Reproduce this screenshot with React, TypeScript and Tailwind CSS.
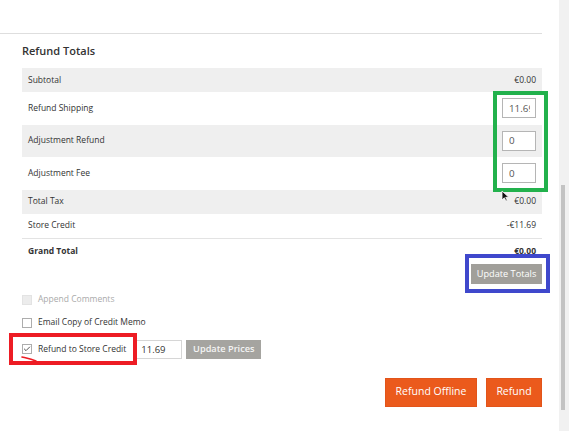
import { Check } from "lucide-react"

interface TotalRow {
  label: string
  value?: string
  input?: string
  shade?: boolean
  tall?: boolean
}

const totals: TotalRow[] = [
  { label: "Subtotal", value: "€0.00", shade: true },
  { label: "Refund Shipping", input: "11.69", tall: true },
  { label: "Adjustment Refund", input: "0", shade: true, tall: true },
  { label: "Adjustment Fee", input: "0", tall: true },
  { label: "Total Tax", value: "€0.00", shade: true },
  { label: "Store Credit", value: "-€11.69" },
]

function Row({ row }: { row: TotalRow }) {
  return (
    <div
      className={`flex items-center justify-between pl-[6px] pr-[6px] ${row.tall ? "h-[32.5px]" : "h-[24px]"} ${
        row.shade ? "bg-[#efefef]" : "bg-white"
      }`}
    >
      <span className="text-[8.5px] text-[#333]">{row.label}</span>
      {row.input !== undefined ? (
        <input
          readOnly
          value={row.input}
          className="w-[34px] h-[20px] border border-[#b5b5b5] bg-white pl-[6px] pr-[5px] text-[9.8px] text-[#555] outline-none"
        />
      ) : (
        <span className="text-[8.5px] text-[#333]">{row.value}</span>
      )}
    </div>
  )
}

export default function App() {
  return (
    <div className="relative flex w-[569px] h-[431px] overflow-hidden bg-white font-['Open_Sans',sans-serif]">
      <div className="w-[559px] shrink-0">
        <div className="h-[34px] w-[542px] border-b border-[#dedede]" />

        <div className="pl-[22px] pr-[17px]">
          <h2 className="mt-[10px] mb-[10px] text-[11px] leading-[14px] font-semibold text-[#333]">Refund Totals</h2>

          <div className="border-b border-[#e3e3e3]">
            {totals.map((row) => (
              <Row key={row.label} row={row} />
            ))}
          </div>

          <div className="flex items-center justify-between h-[25px] pl-[6px] pr-[6px]">
            <span className="text-[8.5px] font-bold text-[#333]">Grand Total</span>
            <span className="text-[8.5px] font-bold text-[#333]">€0.00</span>
          </div>

          <div className="flex justify-end">
            <button className="w-[71px] h-[20px] bg-[#a19f9a] text-[9.2px] text-white">Update Totals</button>
          </div>

          <label className="mt-[9px] flex items-center h-[14px]">
            <span className="w-[10px] h-[10px] border border-[#e3e3e3] bg-[#ececec]" />
            <span className="ml-[6px] text-[8.5px] text-[#aaa]">Append Comments</span>
          </label>

          <label className="mt-[9px] flex items-center h-[14px]">
            <span className="w-[10px] h-[10px] border border-[#adadad] bg-white" />
            <span className="ml-[6px] text-[8.5px] text-[#333]">Email Copy of Credit Memo</span>
          </label>

          <div className="mt-[10px] flex items-center h-[19px]">
            <span className="flex items-center justify-center w-[10px] h-[10px] border border-[#adadad] bg-white">
              <Check className="w-[8px] h-[8px] text-[#333]" strokeWidth={2.5} />
            </span>
            <span className="ml-[6px] text-[8.5px] text-[#333]">Refund to Store Credit</span>
            <input
              readOnly
              value="11.69"
              className="ml-[10px] w-[46px] h-[19px] border border-[#d6d6d6] bg-white pl-[4px] text-[9.5px] text-[#333] outline-none"
            />
            <button className="ml-[4px] w-[75px] h-[19px] bg-[#a5a4a0] text-[9.2px] font-semibold text-[#f4f4f4]">
              Update Prices
            </button>
          </div>

          <div className="mt-[19px] flex justify-end gap-[9px]">
            <button className="w-[92px] h-[29px] bg-[#eb5a1c] border border-[#e2541a] text-[10.5px] font-medium text-white">
              Refund Offline
            </button>
            <button className="w-[56px] h-[29px] bg-[#eb5a1c] border border-[#e2541a] text-[10.5px] font-medium text-white">
              Refund
            </button>
          </div>
        </div>
      </div>

      {/* scrollbar */}
      <div className="relative w-[10px] shrink-0 bg-[#f1f1f1]">
        <div className="absolute left-[2px] top-[185px] w-[4px] h-[225px] bg-[#c3c3c3]" />
      </div>

      {/* highlight marks */}
      <div className="absolute left-[493px] top-[91px] w-[55px] h-[101px] border-[4px] border-[#22b14c]" />
      <div className="absolute left-[465px] top-[254px] w-[85px] h-[39px] border-[4px] border-[#3f48cc]" />
      <div className="absolute left-[9px] top-[333px] w-[128px] h-[32px] border-[4px] border-[#ed1c24]" />
      <svg className="absolute left-[20px] top-[354px]" width="20" height="10" viewBox="0 0 20 10">
        <path d="M2 3 C6 4, 11 5, 16 7" stroke="#ed1c24" strokeWidth="1.6" fill="none" strokeLinecap="round" />
      </svg>

      {/* mouse pointer */}
      <svg className="absolute left-[501px] top-[190px]" width="9" height="12" viewBox="0 0 9 12">
        <path d="M1 1 L1 10 L3.3 7.8 L5 11 L6.3 10.4 L4.7 7.3 L7.8 7.3 Z" fill="#111" stroke="#fff" strokeWidth="0.8" />
      </svg>
    </div>
  )
}
